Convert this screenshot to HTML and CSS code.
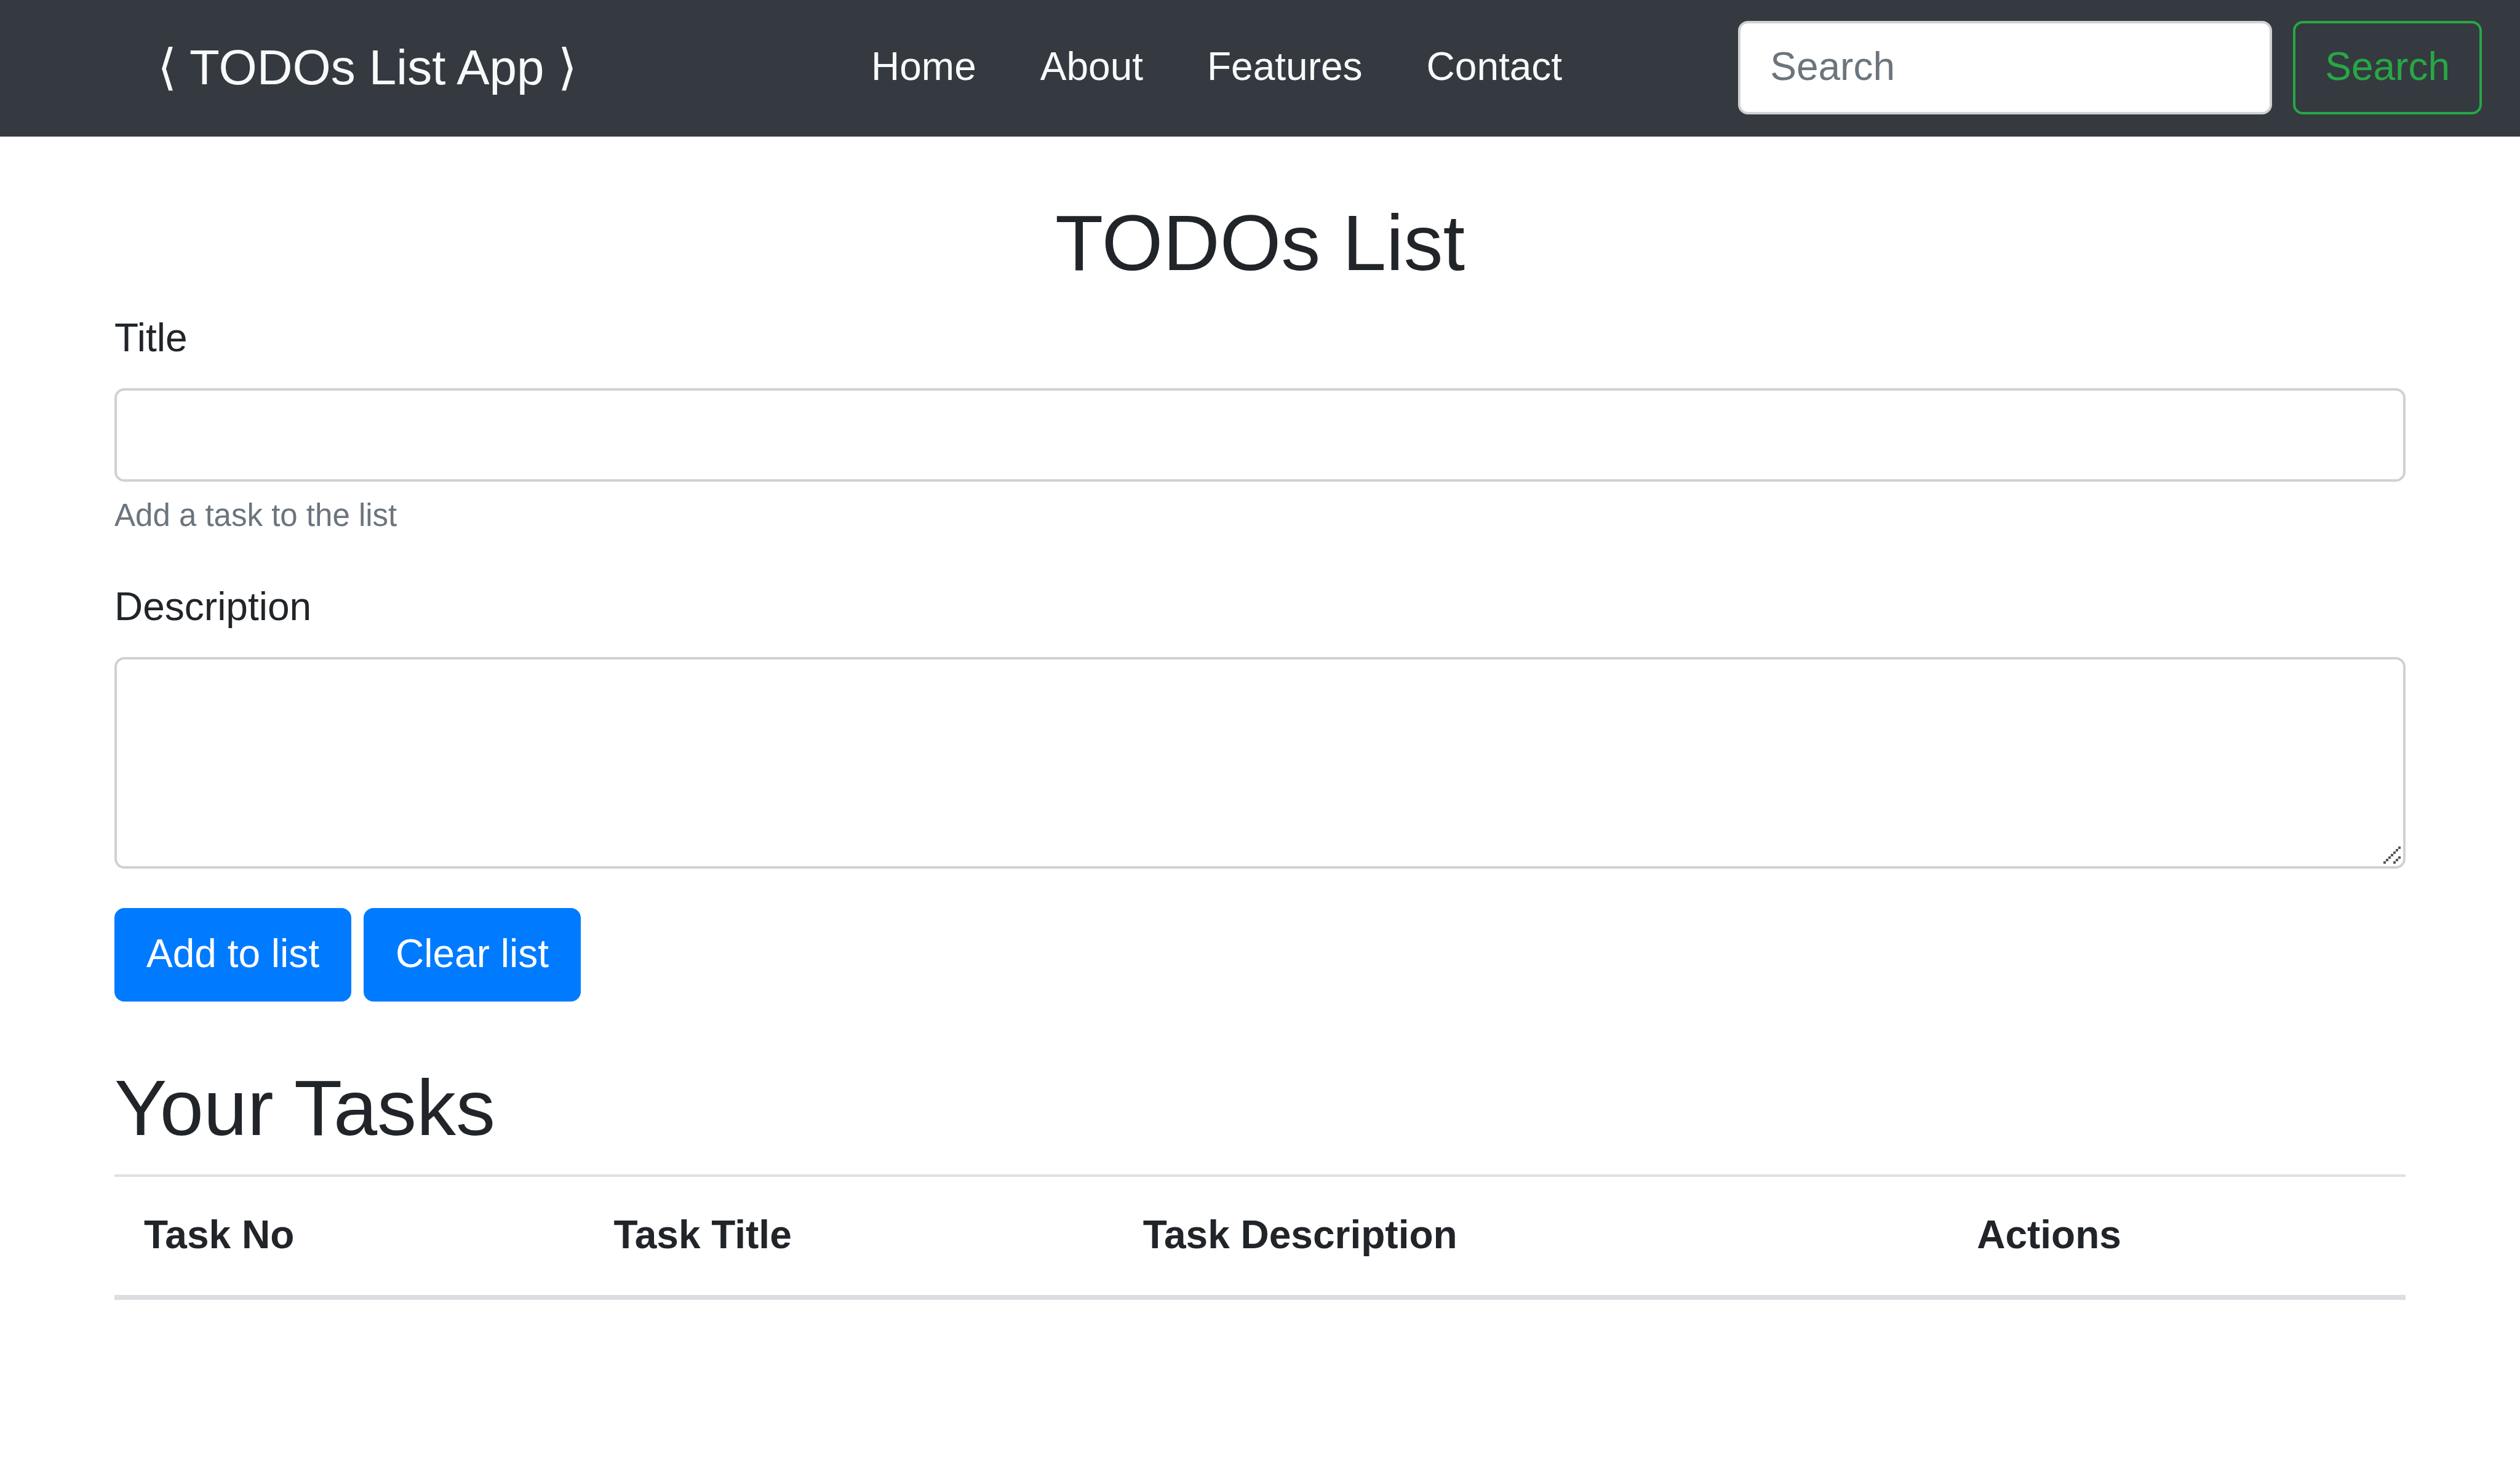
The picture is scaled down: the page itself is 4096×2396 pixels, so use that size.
FILE: index.html
```html
<!DOCTYPE html>
<html lang="en">
<head>
  <meta charset="utf-8">
  <meta name="viewport" content="width=device-width, initial-scale=1">
  <title>TODOs List App</title>
  <link rel="stylesheet" href="styles.css">
</head>
<body>
  <nav class="navbar">
    <a class="navbar-brand" href="#">⟨ TODOs List App ⟩</a>
    <ul class="navbar-nav">
      <li><a class="nav-link" href="#">Home</a></li>
      <li><a class="nav-link" href="#">About</a></li>
      <li><a class="nav-link" href="#">Features</a></li>
      <li><a class="nav-link" href="#">Contact</a></li>
    </ul>
    <form class="search-form">
      <input class="form-control search-input" type="search" placeholder="Search" aria-label="Search">
      <button class="btn btn-outline-success" type="submit">Search</button>
    </form>
  </nav>

  <main class="container">
    <h2 class="page-title">TODOs List</h2>
    <form class="task-form">
      <div class="form-group">
        <label for="title">Title</label>
        <input class="form-control" type="text" id="title" aria-describedby="title-help">
        <small class="form-text" id="title-help">Add a task to the list</small>
      </div>
      <div class="form-group">
        <label for="description">Description</label>
        <div class="textarea-wrap">
          <textarea class="form-control" id="description" rows="3"></textarea>
          <svg class="resize-grip" viewBox="0 0 7 7" aria-hidden="true">
            <path d="M0 6h1v1H0zM1 5h1v1H1zM2 4h1v1H2zM3 3h1v1H3zM4 2h1v1H4zM5 1h1v1H5zM6 0h1v1H6zM4 6h1v1H4zM5 5h1v1H5zM6 4h1v1H6z"/>
          </svg>
        </div>
      </div>
      <div class="actions">
        <button class="btn btn-primary" type="button">Add to list</button>
        <button class="btn btn-primary" type="button">Clear list</button>
      </div>
    </form>

    <section class="tasks">
      <h2>Your Tasks</h2>
      <table class="table">
        <colgroup>
          <col class="col-number">
          <col class="col-title">
          <col class="col-description">
          <col>
        </colgroup>
        <thead>
          <tr>
            <th scope="col">Task No</th>
            <th scope="col">Task Title</th>
            <th scope="col">Task Description</th>
            <th scope="col">Actions</th>
          </tr>
        </thead>
        <tbody></tbody>
      </table>
    </section>
  </main>
</body>
</html>
```
FILE: styles.css
```css
*,
*::before,
*::after {
  box-sizing: border-box;
}

body {
  margin: 0;
  font-family: "Liberation Sans", "DejaVu Sans", sans-serif;
  font-size: 64px;
  line-height: 92px;
  color: #212529;
  background: #fff;
}

h2 {
  margin: 0 0 32px;
  font-size: 128px;
  font-weight: 400;
  line-height: 153px;
}

/* Navigation bar */
.navbar {
  display: flex;
  align-items: center;
  justify-content: space-between;
  padding: 30px 62px 32px 64px;
  background: #343a40;
}

.navbar-brand {
  margin: 0 192px;
  padding: 20px 0;
  font-size: 80px;
  line-height: 120px;
  color: #f8f9fa;
  text-decoration: none;
  white-space: nowrap;
}

.navbar-nav {
  display: flex;
  gap: 40px;
  margin: 0;
  padding: 0;
  list-style: none;
}

.nav-link {
  display: block;
  padding: 32px 32px 36px;
  color: #f8f9fa;
  text-decoration: none;
}

.search-form {
  display: flex;
  gap: 34px;
}

/* Form controls */
.form-control {
  display: block;
  width: 100%;
  margin: 0;
  padding: 24px 48px 28px;
  border: 4px solid #d0d1d3;
  border-radius: 16px;
  font: inherit;
  color: #495057;
  background: #fff;
  appearance: none;
}

.form-control::placeholder {
  color: #6c757d;
  opacity: 1;
}

input.form-control {
  height: 152px;
}

textarea.form-control {
  height: 344px;
  overflow: auto;
  resize: none;
}

.search-form .search-input {
  width: 868px;
}

.btn {
  margin: 0;
  padding: 24px 48px 28px;
  border: 4px solid transparent;
  border-radius: 16px;
  font: inherit;
  white-space: nowrap;
  cursor: pointer;
}

.btn-outline-success {
  color: #28a745;
  border-color: #28a745;
  background: transparent;
}

.btn-primary {
  color: #fff;
  border-color: #007bff;
  background: #007bff;
}

/* Page content */
.container {
  max-width: 3844px;
  margin: 96px auto;
  padding: 0 60px;
}

.page-title {
  text-align: center;
}

.form-group {
  margin-bottom: 64px;
}

.form-group label {
  display: block;
  width: fit-content;
  margin-bottom: 36px;
}

.form-text {
  display: block;
  margin-top: 16px;
  font-size: 51px;
  line-height: 77px;
  color: #6c757d;
}

.textarea-wrap {
  position: relative;
}

.resize-grip {
  position: absolute;
  right: 8px;
  bottom: 8px;
  width: 28px;
  height: 28px;
  fill: #555;
  pointer-events: none;
}

.actions {
  display: flex;
  gap: 20px;
}

.tasks {
  margin-top: 96px;
}

.table {
  width: 100%;
  table-layout: fixed;
  border-collapse: separate;
  border-spacing: 0;
}

.col-number {
  width: 20.5%;
}

.col-title {
  width: 23.1%;
}

.col-description {
  width: 36.4%;
}

.table th {
  padding: 48px 48px 52px;
  border-top: 4px solid #e0e0e1;
  border-bottom: 8px solid #dcdde1;
  text-align: left;
  vertical-align: bottom;
}
```
